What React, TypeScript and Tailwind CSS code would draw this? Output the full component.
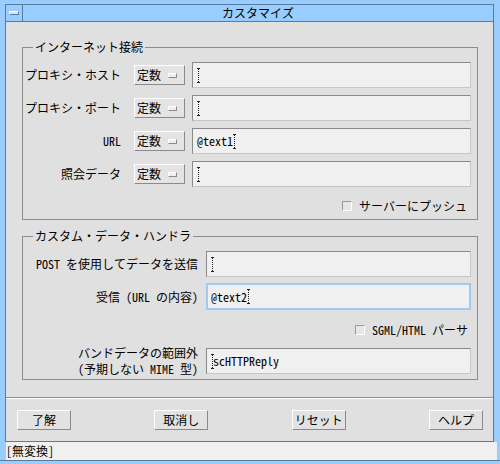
import React from "react";

const font = "font-['Noto_Sans_Mono_CJK_JP','Noto_Sans_CJK_JP',sans-serif]";

function Caret() {
  return (
    <svg width="4" height="15" viewBox="0 0 4 15" className="shrink-0">
      <path d="M0 0.5H3M0 14.5H3" stroke="#222" strokeWidth="1" />
      <path d="M1.5 1V14" stroke="#222" strokeWidth="1" strokeDasharray="1 1" />
    </svg>
  );
}

interface FieldProps {
  value?: string;
  caretAtEnd?: boolean;
  focused?: boolean;
  className?: string;
}

function Field({ value = "", caretAtEnd = false, focused = false, className = "" }: FieldProps) {
  return (
    <div
      className={`flex-1 flex items-center bg-[#f0f0f0] text-[12px] text-black ${
        focused
          ? "h-[27px] border-2 border-[#9fcbf3] pl-[3px]"
          : "h-[26px] border border-t-[#8a8a8a] border-l-[#8a8a8a] border-b-[#c6c6c6] border-r-[#c6c6c6] pl-[4px]"
      } ${className}`}
    >
      {!caretAtEnd && <Caret />}
      {value && <span className={caretAtEnd ? "" : "-ml-[2px]"}>{value}</span>}
      {caretAtEnd && <Caret />}
    </div>
  );
}

function Dropdown() {
  return (
    <div className="ml-[13px] w-[51px] h-[20px] flex items-center pl-[2px] bg-[#e4e4e4] border border-t-white border-l-white border-b-[#8a8a8a] border-r-[#8a8a8a] text-[12px]">
      <span>定数</span>
      <span className="ml-[7px] w-[9px] h-[5px] bg-[#efefef] border border-t-white border-l-white border-b-[#8a8a8a] border-r-[#8a8a8a]" />
    </div>
  );
}

function Check({ label }: { label: string }) {
  return (
    <div className="flex items-center gap-[7px] text-[12px]">
      <span className="w-[10px] h-[10px] bg-[#e6e6e6] border border-t-[#9a9a9a] border-l-[#9a9a9a] border-b-white border-r-white" />
      <span>{label}</span>
    </div>
  );
}

function Button({ label }: { label: string }) {
  return (
    <button className="w-[54px] h-[20px] flex items-center justify-center bg-[#e2e2e2] border border-t-white border-l-white border-b-[#8a8a8a] border-r-[#8a8a8a] text-[12px] text-black">
      {label}
    </button>
  );
}

const proxyRows = [
  { label: "プロキシ・ホスト", value: "" },
  { label: "プロキシ・ポート", value: "" },
  { label: "URL", value: "@text1", end: true },
  { label: "照会データ", value: "" },
];

export default function App() {
  return (
    <div className={`w-[500px] h-[464px] bg-[#99ccff] flex flex-col overflow-hidden text-black ${font}`}>
      <div className="h-[4px] shrink-0" />
      <div className="ml-[5px] w-[489px] border border-[#5b7b9b] flex flex-col shrink-0">
        {/* Title bar */}
        <div className="h-[17px] flex border-b border-[#5b7b9b] bg-[#99ccff]">
          <div className="w-[17px] border-r border-[#5b7b9b] flex items-center justify-center">
            <span className="w-[10px] h-[4px] bg-[#cfe6ff] border border-[#5b7b9b] border-t-white border-l-white" />
          </div>
          <div className="flex-1 flex items-center justify-center text-[12px] leading-none">カスタマイズ</div>
        </div>

        {/* Body */}
        <div className="h-[419px] bg-[#e0e0e0] flex flex-col">
          <div className="pl-[16px] pr-[15px] flex flex-col">
            <fieldset className="mt-[17px] border border-[#8c8c8c] pt-[7px] pb-[5px]">
              <legend className="ml-[10px] px-[2px] text-[12px] leading-[16px]">インターネット接続</legend>
              <div className="flex flex-col gap-[7px]">
                {proxyRows.map((r) => (
                  <div key={r.label} className="flex items-center h-[26px] mr-[6px]">
                    <div className="w-[98px] text-right text-[12px]">{r.label}</div>
                    <Dropdown />
                    <Field value={r.value} caretAtEnd={r.end} className="ml-[7px]" />
                  </div>
                ))}
              </div>
              <div className="mt-[11px] h-[16px] flex justify-end pr-[10px]">
                <Check label="サーバーにプッシュ" />
              </div>
            </fieldset>

            <fieldset className="mt-[8px] border border-[#8c8c8c] pt-[7px] pb-[5px]">
              <legend className="ml-[10px] px-[2px] text-[12px] leading-[16px]">カスタム・データ・ハンドラ</legend>
              <div className="flex items-center h-[26px] mr-[6px]">
                <div className="w-[175px] text-right text-[12px]">POST を使用してデータを送信</div>
                <Field className="ml-[8px]" />
              </div>
              <div className="flex items-center h-[27px] mt-[6px] mr-[6px]">
                <div className="w-[175px] text-right text-[12px]">受信 (URL の内容)</div>
                <Field value="@text2" caretAtEnd focused className="ml-[8px]" />
              </div>
              <div className="mt-[12px] h-[16px] flex justify-end pr-[9px]">
                <Check label="SGML/HTML パーサ" />
              </div>
              <div className="flex items-center h-[26px] mt-[10px] mr-[6px]">
                <div className="w-[175px] text-right text-[12px] leading-[16px]">
                  <div>バンドデータの範囲外</div>
                  <div>(予期しない MIME 型)</div>
                </div>
                <Field value="scHTTPReply" className="ml-[8px]" />
              </div>
            </fieldset>
          </div>

          <div className="mt-[17px] border-t border-t-[#8c8c8c] border-b border-b-white" />

          <div className="mt-[11px] flex justify-between pl-[11px] pr-[10px]">
            <Button label="了解" />
            <Button label="取消し" />
            <Button label="リセット" />
            <Button label="ヘルプ" />
          </div>
        </div>
      </div>

      {/* Status bar */}
      <div className="ml-[6px] w-[491px] h-[18px] shrink-0 bg-[#f0f0f0] flex items-center text-[12px] leading-none">
        <span>[無変換]</span>
      </div>
      <div className="flex-1 border-t border-[#5b7b9b]" />
    </div>
  );
}
